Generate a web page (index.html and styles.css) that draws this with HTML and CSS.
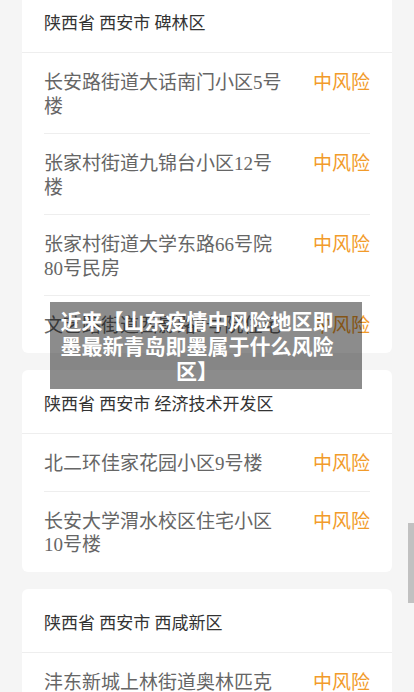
FILE: index.html
```html
<!DOCTYPE html>
<html lang="zh-CN">
<head>
<meta charset="utf-8">
<title>风险地区</title>
<link rel="stylesheet" href="styles.css">
</head>
<body>
<main class="page">
  <section class="card">
    <div class="card-head">陕西省 西安市 碑林区</div>
    <ul class="list">
      <li class="row"><span class="addr">长安路街道大话南门小区5号楼</span><span class="risk">中风险</span></li>
      <li class="row"><span class="addr">张家村街道九锦台小区12号楼</span><span class="risk">中风险</span></li>
      <li class="row"><span class="addr">张家村街道大学东路66号院80号民房</span><span class="risk">中风险</span></li>
      <li class="row"><span class="addr">文艺路街道西影路3号院住宅</span><span class="risk">中风险</span></li>
    </ul>
  </section>
  <section class="card">
    <div class="card-head">陕西省 西安市 经济技术开发区</div>
    <ul class="list">
      <li class="row"><span class="addr">北二环佳家花园小区9号楼</span><span class="risk">中风险</span></li>
      <li class="row"><span class="addr">长安大学渭水校区住宅小区10号楼</span><span class="risk">中风险</span></li>
    </ul>
  </section>
  <section class="card">
    <div class="card-head">陕西省 西安市 西咸新区</div>
    <ul class="list">
      <li class="row"><span class="addr">沣东新城上林街道奥林匹克花园三期</span><span class="risk">中风险</span></li>
    </ul>
  </section>
</main>
<div class="title-overlay">近来【山东疫情中风险地区即墨最新青岛即墨属于什么风险区】</div>
<div class="scroll-thumb"></div>
</body>
</html>
```

FILE: styles.css
```css
html, body {
  margin: 0;
  padding: 0;
  overflow: hidden;
  background: #f5f5f5;
}

body {
  width: 414px;
  height: 692px;
  position: relative;
  font-family: "Liberation Serif", "Noto Sans CJK SC", serif;
}

.page {
  margin-top: -11px;
  padding: 0 22px;
  display: flex;
  flex-direction: column;
  gap: 17.5px;
}

.card {
  background: #ffffff;
  border-radius: 6px;
}

.card-head {
  padding: 23px 22px 17px;
  font-size: 17px;
  line-height: 23px;
  color: #333333;
  border-bottom: 1px solid #eeeeee;
}

.list {
  list-style: none;
  margin: 0;
  padding: 0 22px;
}

.row {
  display: flex;
  align-items: flex-start;
  padding: 18px 0 15px;
  border-bottom: 1px solid #eeeeee;
  font-size: 19px;
  line-height: 23.5px;
}

.row:last-child {
  border-bottom: none;
}

.addr {
  width: 242px;
  color: #666666;
}

.risk {
  margin-left: auto;
  color: #f29b2a;
  white-space: nowrap;
}

.title-overlay {
  position: absolute;
  left: 50px;
  top: 302px;
  width: 312px;
  box-sizing: border-box;
  padding: 6px 28px 6px 10px;
  background: rgba(0, 0, 0, 0.45);
  color: #ffffff;
  font-family: "Noto Sans CJK SC", sans-serif;
  font-weight: 700;
  font-size: 21px;
  line-height: 25px;
  text-align: center;
}

.scroll-thumb {
  position: absolute;
  right: 0;
  top: 523px;
  width: 6px;
  height: 80px;
  background: #c1c1c1;
}
```
